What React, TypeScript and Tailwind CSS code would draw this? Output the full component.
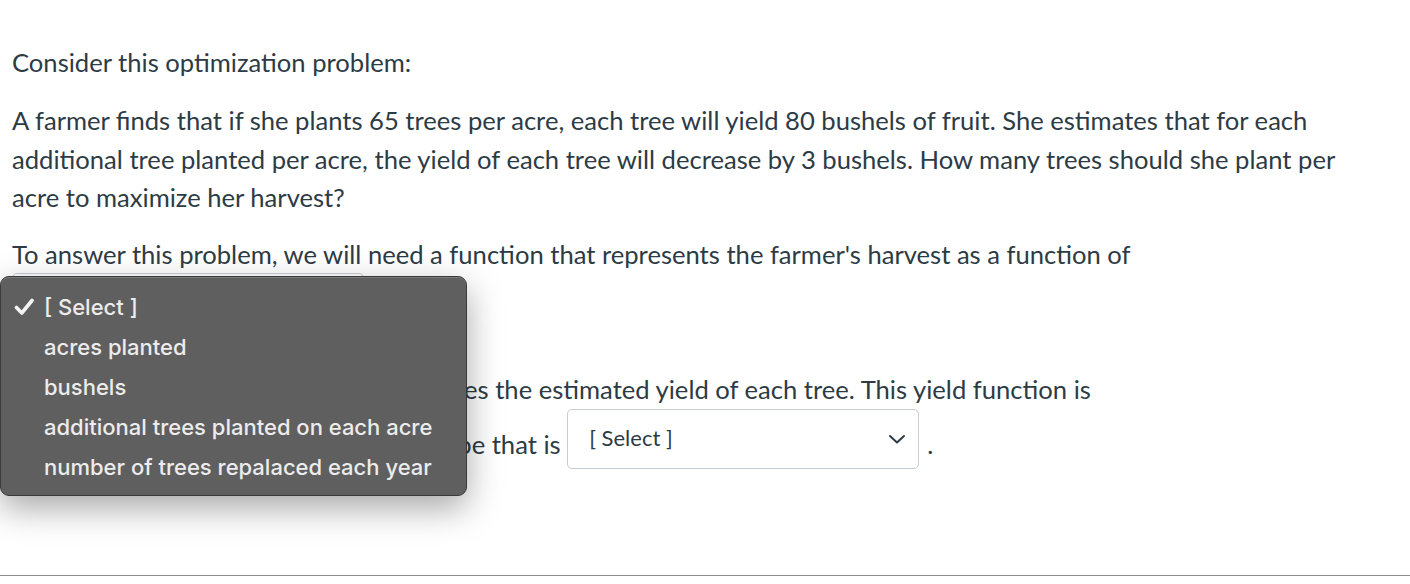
import React from "react";

function Chevron() {
  return (
    <svg width="18" height="12" viewBox="0 0 18 12" fill="none">
      <path d="M2 3 L9 9.5 L16 3" stroke="#2d3b45" strokeWidth="2" strokeLinecap="round" strokeLinejoin="round" />
    </svg>
  );
}

function SelectBox() {
  return (
    <span className="inline-flex items-center justify-between h-[60px] w-[352px] mb-[18px] rounded-[5px] border border-[#c7cdd1] bg-white pl-[21px] pr-[12px] align-middle text-[22px] leading-[30px] text-[#2d3b45]">
      <span className="-mt-[2px]">[ Select ]</span>
      <Chevron />
    </span>
  );
}

function Check() {
  return (
    <svg width="21" height="18" viewBox="0 0 21 18" fill="none">
      <path d="M2.5 9.5 L7.8 15 L18 2.5" stroke="#f4f4f4" strokeWidth="3.6" strokeLinecap="round" strokeLinejoin="round" />
    </svg>
  );
}

export default function App() {
  const items = [
    "acres planted",
    "bushels",
    "additional trees planted on each acre",
    "number of trees repalaced each year",
  ];
  return (
    <div className="relative w-[1410px] h-[584px] overflow-hidden bg-white" style={{ fontFamily: "Lato, 'Open Sans', sans-serif" }}>
      <div className="w-[1385px] pl-[12px] pt-[43px] text-[25.6px] leading-[38.5px] text-[#2d3b45]">
        <p>Consider this optimization problem:</p>
        <p className="mt-[19.5px]">
          A farmer finds that if she plants 65 trees per acre, each tree will yield 80 bushels of fruit. She estimates that for each additional tree planted per acre, the yield of each tree will decrease by 3 bushels. How many trees should she plant per acre to maximize her harvest?
        </p>
        <p className="mt-[18px]">
          To answer this problem, we will need a function that represents the farmer's harvest as a function of <SelectBox />.
        </p>
        <p className="mt-[19px]">
          We also define a new function which gives the estimated yield of each tree. This yield function is
          <br />
          a direct function and it is again of the type that is <SelectBox />
          <span className="ml-[8px]">.</span>
        </p>
      </div>

      <div className="absolute left-0 right-0 top-[575px] h-[1px] bg-[#8c8c8c]" />

      <div
        className="absolute left-0 top-[276px] w-[467px] h-[220px] rounded-[9px] border border-[#3a3a3a] bg-[#5f5f5f] shadow-[0_12px_34px_rgba(0,0,0,0.35),inset_0_1px_0_rgba(255,255,255,0.18)] pt-[10px]"
        style={{ fontFamily: "Inter, 'Noto Sans', Roboto, sans-serif" }}
      >
        <div className="flex h-[40px] items-center text-[22px] font-medium text-[#ececec]">
          <span className="w-[43px] flex justify-center pl-[4px]"><Check /></span>
          <span>[ Select ]</span>
        </div>
        {items.map((t) => (
          <div key={t} className="flex h-[40px] items-center pl-[43px] text-[22px] font-medium text-[#ececec]">
            {t}
          </div>
        ))}
      </div>
    </div>
  );
}
